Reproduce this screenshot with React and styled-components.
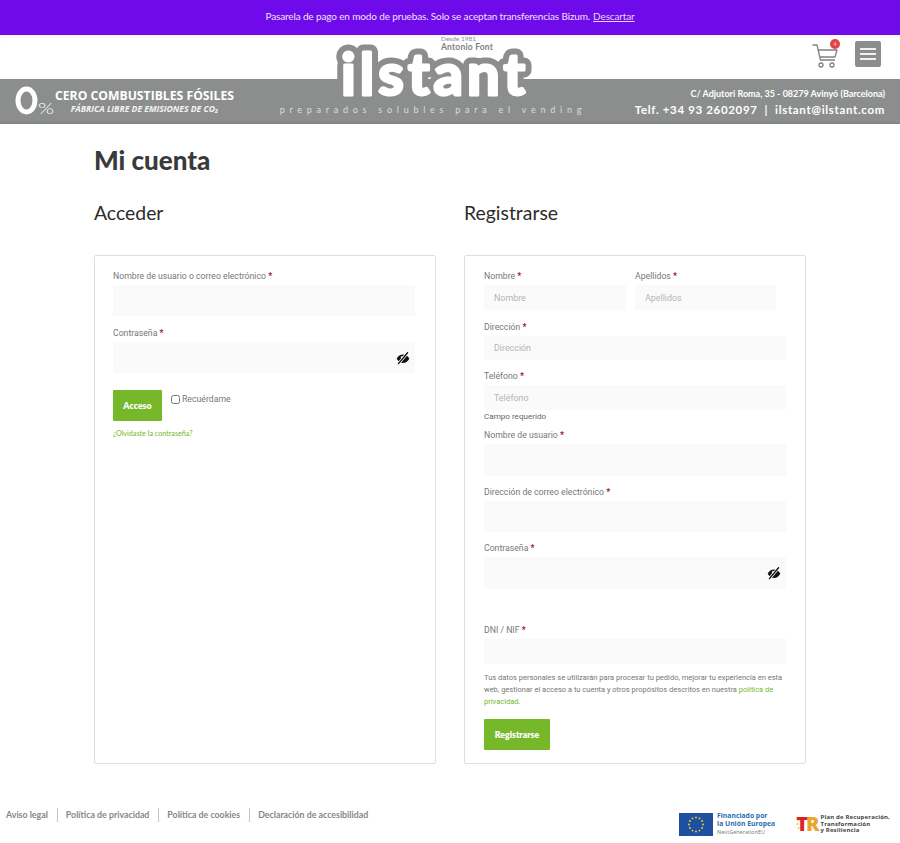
import React from "react";
import styled, { createGlobalStyle } from "styled-components";

const GlobalStyle = createGlobalStyle`
  html, body {
    margin: 0;
    padding: 0;
    background: #ffffff;
  }
  * {
    box-sizing: border-box;
  }
`;

const headingFont = `Lato, "Open Sans", sans-serif`;
const bodyFont = `Roboto, "Liberation Sans", sans-serif`;
const green = "#76b82a";
const bandGray = "#8c8e8e";

const Page = styled.div`
  position: relative;
  width: 900px;
  height: 843px;
  overflow: hidden;
  font-family: ${bodyFont};
`;

const Notice = styled.div`
  height: 35px;
  padding-bottom: 3px;
  background: #6f0aea;
  color: #f0e4ff;
  display: flex;
  align-items: center;
  justify-content: center;
  font-family: ${headingFont};
  font-size: 10px;
  font-weight: 400;
  letter-spacing: -0.14px;
  gap: 3px;
  a {
    color: #e6d4ff;
    text-decoration: underline;
  }
`;

const TopBar = styled.div`
  height: 44px;
  display: flex;
  align-items: flex-start;
  justify-content: flex-end;
  gap: 16px;
  padding: 6px 19px 0 0;
  box-shadow: inset 0 6px 6px -5px rgba(0, 0, 0, 0.08);
`;

const CartWrap = styled.div`
  position: relative;
  width: 27px;
  height: 26px;
  margin-top: 2px;
`;

const Badge = styled.span`
  position: absolute;
  top: -4px;
  right: -1px;
  width: 10px;
  height: 10px;
  border-radius: 50%;
  background: #e04545;
  color: #f5c4c4;
  font-size: 6px;
  line-height: 10px;
  text-align: center;
`;

const MenuButton = styled.div`
  width: 26px;
  height: 26px;
  border-radius: 2px;
  background: ${bandGray};
  display: flex;
  flex-direction: column;
  justify-content: center;
  align-items: center;
  gap: 3px;
  span {
    display: block;
    width: 16px;
    height: 2px;
    background: #f2f2f2;
  }
`;

const Band = styled.div`
  height: 45px;
  background: ${bandGray};
  border-bottom: 2px solid #858787;
  display: flex;
  justify-content: space-between;
  padding: 0 15px;
  color: #ffffff;
`;

const Promo = styled.div`
  display: flex;
  align-items: center;
  width: 220px;
`;

const PromoText = styled.div`
  display: flex;
  flex-direction: column;
  align-items: center;
  margin-top: 1px;
`;

const PromoTitle = styled.div`
  font-family: "Open Sans", sans-serif;
  font-size: 12.2px;
  font-weight: 700;
  line-height: 15px;
  white-space: nowrap;
`;

const PromoSub = styled.div`
  font-family: "Open Sans", sans-serif;
  font-size: 8.6px;
  font-style: italic;
  font-weight: 700;
  line-height: 12px;
  white-space: nowrap;
  color: #f3f3f3;
`;

const Tagline = styled.div`
  align-self: flex-end;
  font-family: ${headingFont};
  font-size: 9px;
  letter-spacing: 4.75px;
  color: #dcdcdc;
  padding-bottom: 7px;
  margin-right: 4px;
  white-space: nowrap;
`;

const Contact = styled.div`
  display: flex;
  flex-direction: column;
  align-items: flex-end;
  justify-content: center;
  padding-top: 5px;
`;

const Address = styled.div`
  font-family: ${headingFont};
  font-size: 9px;
  font-weight: 700;
  line-height: 14px;
  white-space: nowrap;
`;

const Phone = styled.div`
  font-family: ${headingFont};
  font-size: 11.5px;
  font-weight: 700;
  letter-spacing: 0.66px;
  line-height: 18px;
  white-space: nowrap;
`;

const Logo = styled.div`
  position: absolute;
  left: 330px;
  top: 34px;
  width: 208px;
  height: 72px;
`;

const LogoSvg = styled.svg`
  display: block;
  overflow: visible;
`;

const Since = styled.div`
  position: absolute;
  left: 111px;
  top: 1px;
  font-family: ${headingFont};
  font-size: 6.5px;
  line-height: 7px;
  color: #8c8e8e;
  white-space: nowrap;
`;

const Founder = styled.div`
  position: absolute;
  left: 111px;
  top: 8px;
  font-family: ${headingFont};
  font-size: 8.5px;
  font-weight: 700;
  line-height: 11px;
  letter-spacing: 0.2px;
  color: #7f8181;
  white-space: nowrap;
`;

const Main = styled.main`
  width: 712px;
  margin: 0 auto;
  padding-top: 20px;
`;

const Title = styled.h1`
  margin: 0 0 25px;
  font-family: ${headingFont};
  font-size: 26px;
  font-weight: 900;
  line-height: 32px;
  color: #3a3a3a;
`;

const Columns = styled.div`
  display: grid;
  grid-template-columns: 342px 342px;
  gap: 28px;
`;

const Column = styled.section`
  display: flex;
  flex-direction: column;
`;

const SubTitle = styled.h2`
  margin: 0 0 30px;
  font-family: ${headingFont};
  font-size: 19.4px;
  font-weight: 400;
  line-height: 24px;
  color: #2c2c2c;
`;

const Card = styled.div`
  flex: 1;
  border: 1px solid #dedede;
  border-radius: 2px;
  padding: 12px 19px 13px ${(props) => props.$left ?? 19}px;
`;

const Field = styled.div`
  margin-bottom: ${(props) => props.$after ?? 9}px;
  width: ${(props) => props.$width ?? "302px"};
`;

const Label = styled.label`
  display: block;
  height: 16px;
  margin-bottom: 1px;
  font-size: 8.7px;
  line-height: 17px;
  color: #777777;
  white-space: nowrap;
  b {
    color: #a3152a;
    font-weight: 700;
  }
`;

const InputWrap = styled.div`
  position: relative;
`;

const Input = styled.input`
  display: block;
  width: 100%;
  height: ${(props) => props.$h ?? 31}px;
  border: none;
  outline: none;
  background: #fafafa;
  padding: 0 10px;
  font-family: ${bodyFont};
  font-size: 8.9px;
  &::placeholder {
    color: #b5b5b5;
    opacity: 1;
  }
`;

const EyeSvg = styled.svg`
  position: absolute;
  right: 5px;
  top: 9px;
`;

const FieldRow = styled.div`
  display: flex;
  gap: 9px;
`;

const LoginRow = styled.div`
  display: flex;
  align-items: flex-start;
  gap: 9px;
  margin-top: 17px;
`;

const Button = styled.button`
  width: ${(props) => props.$width}px;
  height: 31px;
  border: none;
  border-radius: 1px;
  background: ${green};
  color: #ffffff;
  font-family: ${headingFont};
  font-size: 8.8px;
  font-weight: 800;
  padding: 0;
`;

const Remember = styled.label`
  display: flex;
  align-items: center;
  gap: 2px;
  font-size: 8.7px;
  line-height: 18px;
  color: #777777;
  input {
    width: 9px;
    height: 9px;
    margin: 0;
  }
`;

const LostLink = styled.a`
  display: block;
  margin-top: 8px;
  font-family: ${headingFont};
  font-size: 7.2px;
  line-height: 10px;
  color: ${green};
  text-decoration: none;
`;

const Required = styled.div`
  height: 17px;
  padding-top: 1px;
  font-size: 8.1px;
  line-height: 11px;
  color: #666666;
`;

const Privacy = styled.p`
  margin: 8px 0 11px;
  font-size: 7.5px;
  line-height: 12px;
  color: #777777;
  a {
    color: ${green};
    text-decoration: none;
  }
`;

const Footer = styled.footer`
  display: flex;
  justify-content: space-between;
  align-items: flex-start;
  padding: 44px 10px 0 6px;
`;

const FooterLinks = styled.nav`
  display: flex;
  align-items: center;
  height: 14px;
`;

const FooterLink = styled.a`
  font-family: ${headingFont};
  font-size: 8.8px;
  font-weight: 700;
  line-height: 14px;
  color: #858787;
  white-space: nowrap;
  padding: 0 9px 0 8px;
  border-left: 1px solid #c4c4c4;
  &:first-child {
    padding-left: 0;
    border-left: none;
  }
`;

const Sponsors = styled.div`
  display: flex;
  align-items: center;
  gap: 21px;
  margin-top: 4px;
`;

const Sponsor = styled.div`
  display: flex;
  align-items: center;
  gap: ${(props) => props.$gap}px;
`;

const EuText = styled.div`
  font-family: "Open Sans", sans-serif;
  font-size: 6.8px;
  font-weight: 700;
  line-height: 8px;
  color: #2a6fb0;
  white-space: nowrap;
  small {
    display: block;
    font-size: 5.5px;
    font-weight: 400;
    color: #777777;
  }
`;

const RecoveryMark = styled.div`
  display: flex;
  align-items: center;
  height: 22px;
  font-family: "Open Sans", sans-serif;
  font-size: 20px;
  font-weight: 800;
  line-height: 22px;
  letter-spacing: -2px;
  svg {
    margin-right: -4px;
  }
`;

const RedLetter = styled.span`
  color: #d8232a;
`;

const GoldLetter = styled.span`
  color: #e9a52c;
`;

const PlanText = styled.div`
  font-family: "Open Sans", sans-serif;
  font-size: 6px;
  font-weight: 700;
  line-height: 6.5px;
  letter-spacing: 0.16px;
  color: #444444;
  white-space: nowrap;
`;

const CartIcon = () => (
  <svg width="27" height="26" viewBox="0 0 27 26" fill="none" stroke="#808282" strokeWidth="1.3">
    <path d="M1 2h4l3.5 15h14" strokeLinecap="round" strokeLinejoin="round" />
    <path d="M6 7h19l-2 7H8" strokeLinejoin="round" />
    <circle cx="9" cy="22" r="2" />
    <circle cx="20" cy="22" r="2" />
  </svg>
);

const ZeroIcon = () => (
  <svg width="40" height="32" viewBox="0 0 40 32">
    <ellipse cx="11.5" cy="15.5" rx="8.5" ry="11.5" fill="none" stroke="#ffffff" strokeWidth="5" />
    <text x="23" y="29" textLength="16" lengthAdjust="spacingAndGlyphs" fontFamily="Lato, sans-serif" fontWeight="300" fontSize="16" fill="#ffffff">%</text>
  </svg>
);

const EuFlag = () => {
  const stars = Array.from({ length: 12 }, (_, i) => {
    const a = (i * Math.PI) / 6;
    return [17 + Math.cos(a) * 7, 11.5 + Math.sin(a) * 7];
  });
  return (
    <svg width="34" height="23" viewBox="0 0 34 23">
      <rect width="34" height="23" fill="#1f4f9f" />
      {stars.map(([x, y], i) => (
        <circle key={i} cx={x} cy={y} r="0.9" fill="#f2d33a" />
      ))}
    </svg>
  );
};

const RecoveryDots = () => (
  <svg width="4" height="22" viewBox="0 0 4 22">
    <circle cx="2.5" cy="7" r="0.9" fill="#f2c33a" />
    <circle cx="1.2" cy="11" r="0.9" fill="#f2c33a" />
    <circle cx="2.5" cy="15" r="0.9" fill="#f2c33a" />
  </svg>
);

const logoText = {
  x: 11,
  y: 61,
  textLength: 184,
  lengthAdjust: "spacing",
  fontFamily: "Lato, sans-serif",
  fontWeight: 700,
  fontSize: 58,
  strokeLinejoin: "round",
};

const IlstantLogo = () => (
  <Logo>
    <LogoSvg width="208" height="72" viewBox="0 0 208 72">
      <text {...logoText} fill={bandGray} stroke={bandGray} strokeWidth="15">ilstant</text>
      <text {...logoText} fill="#ffffff" stroke="#ffffff" strokeWidth="3">ilstant</text>
    </LogoSvg>
    <Since>Desde 1981</Since>
    <Founder>Antonio Font</Founder>
  </Logo>
);

const PasswordEye = () => (
  <EyeSvg width="14" height="14" viewBox="0 0 20 20">
    <path d="M1 11c2-4 5.500-6 9-6s7 2 9 6c-2 4-5.500 6-9 6s-7-2-9-6z" fill="#111111" />
    <circle cx="9" cy="9.500" r="2.200" fill="#ffffff" />
    <line x1="3.500" y1="18" x2="16.500" y2="2.500" stroke="#ffffff" strokeWidth="4" />
    <line x1="3.500" y1="18" x2="16.500" y2="2.500" stroke="#111111" strokeWidth="2" strokeLinecap="round" />
  </EyeSvg>
);

export default function App() {
  return (
    <Page>
      <GlobalStyle />
      <Notice>
        Pasarela de pago en modo de pruebas. Solo se aceptan transferencias Bizum. <a href="#">Descartar</a>
      </Notice>
      <TopBar>
        <CartWrap>
          <CartIcon />
          <Badge>4</Badge>
        </CartWrap>
        <MenuButton>
          <span />
          <span />
          <span />
        </MenuButton>
      </TopBar>
      <Band>
        <Promo>
          <ZeroIcon />
          <PromoText>
            <PromoTitle>CERO COMBUSTIBLES FÓSILES</PromoTitle>
            <PromoSub>FÁBRICA LIBRE DE EMISIONES DE CO₂</PromoSub>
          </PromoText>
        </Promo>
        <Tagline>preparados solubles para el vending</Tagline>
        <Contact>
          <Address>C/ Adjutori Roma, 35 - 08279 Avinyó (Barcelona)</Address>
          <Phone>Telf. +34 93 2602097 &nbsp;|&nbsp; ilstant@ilstant.com</Phone>
        </Contact>
      </Band>
      <IlstantLogo />

      <Main>
        <Title>Mi cuenta</Title>
        <Columns>
          <Column>
            <SubTitle>Acceder</SubTitle>
            <Card $left={18}>
              <Field>
                <Label>Nombre de usuario o correo electrónico <b>*</b></Label>
                <Input />
              </Field>
              <Field $after={0}>
                <Label>Contraseña <b>*</b></Label>
                <InputWrap>
                  <Input type="password" />
                  <PasswordEye />
                </InputWrap>
              </Field>
              <LoginRow>
                <Button $width={49}>Acceso</Button>
                <Remember>
                  <input type="checkbox" />
                  Recuérdame
                </Remember>
              </LoginRow>
              <LostLink href="#">¿Olvidaste la contraseña?</LostLink>
            </Card>
          </Column>
          <Column>
            <SubTitle>Registrarse</SubTitle>
            <Card>
              <FieldRow>
                <Field $width="142px">
                  <Label>Nombre <b>*</b></Label>
                  <Input $h={25} placeholder="Nombre" />
                </Field>
                <Field $width="141px">
                  <Label>Apellidos <b>*</b></Label>
                  <Input $h={25} placeholder="Apellidos" />
                </Field>
              </FieldRow>
              <Field $after={8}>
                <Label>Dirección <b>*</b></Label>
                <Input $h={24} placeholder="Dirección" />
              </Field>
              <Field $after={0}>
                <Label>Teléfono <b>*</b></Label>
                <Input $h={25} placeholder="Teléfono" />
              </Field>
              <Required>Campo requerido</Required>
              <Field $after={8}>
                <Label>Nombre de usuario <b>*</b></Label>
                <Input $h={32} />
              </Field>
              <Field $after={8}>
                <Label>Dirección de correo electrónico <b>*</b></Label>
                <Input $h={31} />
              </Field>
              <Field $after={33}>
                <Label>Contraseña <b>*</b></Label>
                <InputWrap>
                  <Input $h={32} type="password" />
                  <PasswordEye />
                </InputWrap>
              </Field>
              <Field $after={0}>
                <Label>DNI / NIF <b>*</b></Label>
                <Input $h={25} />
              </Field>
              <Privacy>
                Tus datos personales se utilizarán para procesar tu pedido, mejorar tu experiencia en esta web, gestionar el acceso a tu cuenta y otros propósitos descritos en nuestra <a href="#">política de privacidad</a>.
              </Privacy>
              <Button $width={66}>Registrarse</Button>
            </Card>
          </Column>
        </Columns>
      </Main>

      <Footer>
        <FooterLinks>
          <FooterLink>Aviso legal</FooterLink>
          <FooterLink>Política de privacidad</FooterLink>
          <FooterLink>Política de cookies</FooterLink>
          <FooterLink>Declaración de accesibilidad</FooterLink>
        </FooterLinks>
        <Sponsors>
          <Sponsor $gap={4}>
            <EuFlag />
            <EuText>
              Financiado por<br />la Unión Europea
              <small>NextGenerationEU</small>
            </EuText>
          </Sponsor>
          <Sponsor $gap={3}>
            <RecoveryMark>
              <RecoveryDots />
              <RedLetter>T</RedLetter>
              <GoldLetter>R</GoldLetter>
            </RecoveryMark>
            <PlanText>
              Plan de Recuperación,<br />Transformación<br />y Resiliencia
            </PlanText>
          </Sponsor>
        </Sponsors>
      </Footer>
    </Page>
  );
}
